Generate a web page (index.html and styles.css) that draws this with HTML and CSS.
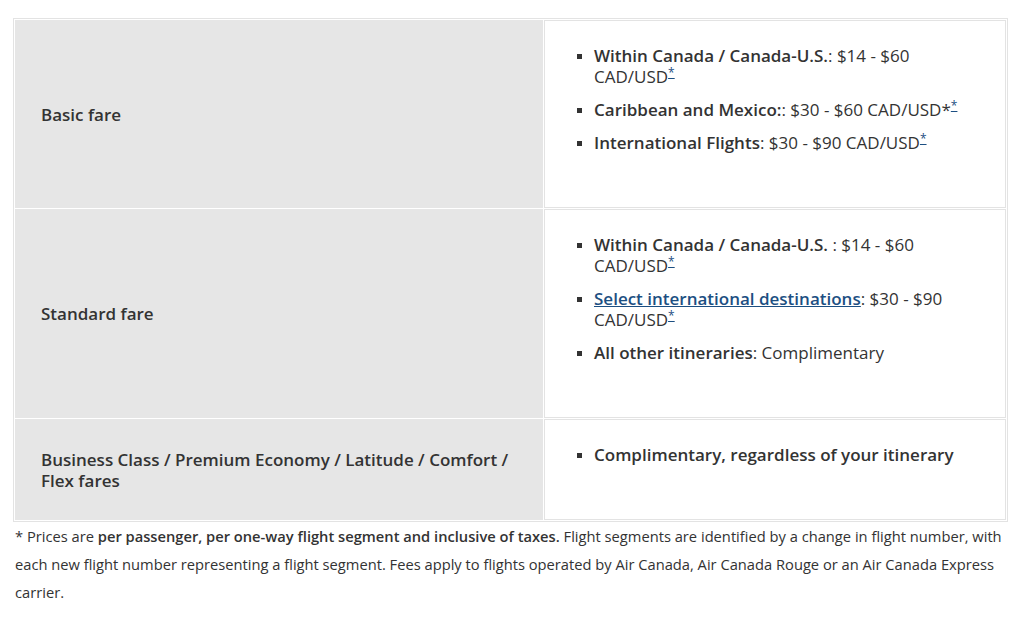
FILE: index.html
```html
<!DOCTYPE html>
<html lang="en">
<head>
<meta charset="utf-8">
<title>Seat selection fees</title>
<link rel="stylesheet" href="styles.css">
</head>
<body>
<div class="page">
  <table class="fares">
    <tr>
      <th class="fare-name">Basic fare</th>
      <td class="fare-info">
        <ul>
          <li><strong>Within Canada / Canada-U.S.</strong>: $14 - $60 CAD/USD<sup><a href="#note">*</a></sup></li>
          <li><strong>Caribbean and Mexico:</strong>: $30 - $60 CAD/USD*<sup><a href="#note">*</a></sup></li>
          <li><strong>International Flights</strong>: $30 - $90 CAD/USD<sup><a href="#note">*</a></sup></li>
        </ul>
      </td>
    </tr>
    <tr>
      <th class="fare-name">Standard fare</th>
      <td class="fare-info">
        <ul>
          <li><strong>Within Canada / Canada-U.S.</strong> : $14 - $60 CAD/USD<sup><a href="#note">*</a></sup></li>
          <li><a class="dest" href="#"><strong>Select international destinations</strong></a>: $30 - $90 CAD/USD<sup><a href="#note">*</a></sup></li>
          <li><strong>All other itineraries</strong>: Complimentary</li>
        </ul>
      </td>
    </tr>
    <tr>
      <th class="fare-name">Business Class / Premium Economy / Latitude / Comfort / Flex fares</th>
      <td class="fare-info">
        <ul>
          <li><strong>Complimentary, regardless of your itinerary</strong></li>
        </ul>
      </td>
    </tr>
  </table>
  <p class="note" id="note">* Prices are <strong>per passenger, per one-way flight segment and inclusive of taxes.</strong> Flight segments are identified by a change in flight number, with each new flight number representing a flight segment. Fees apply to flights operated by Air Canada, Air Canada Rouge or an Air Canada Express carrier.</p>
</div>
</body>
</html>
```
FILE: styles.css
```css
html, body {
  margin: 0;
  padding: 0;
  background: #ffffff;
}
body {
  font-family: "Open Sans", "Liberation Sans", sans-serif;
  color: #333333;
}
.page {
  padding: 18px 16px 0 13px;
}
.fares {
  width: 100%;
  border-collapse: separate;
  border-spacing: 1px;
  border: 1px solid #e3e3e3;
}
.fare-name {
  width: 528px;
  box-sizing: border-box;
  background: #e6e6e6;
  text-align: left;
  vertical-align: middle;
  font-size: 17px;
  font-weight: 600;
  line-height: 21px;
  padding: 24px 24px 24px 26px;
  color: #333333;
}
.fare-info {
  border: 1px solid #e3e3e3;
  vertical-align: middle;
  padding: 24px 30px 24px 33px;
  font-size: 17px;
  line-height: 21px;
}
.fare-info ul {
  margin: 0 0 30px 0;
  padding-left: 16px;
  list-style: square;
}
.fare-info li {
  margin-bottom: 12px;
}
.fare-info strong {
  font-weight: 600;
  color: #333333;
}
.fare-info li::marker {
  font-size: 14px;
}
sup {
  font-size: 12px;
  line-height: 0;
  vertical-align: 6px;
}
sup a {
  color: #1c4f82;
  text-decoration: underline;
}
.dest, .dest strong {
  color: #1c4f82;
  text-decoration: underline;
}
.note {
  margin: 0;
  padding-left: 2px;
  font-size: 14.7px;
  line-height: 28px;
  color: #333333;
}
.note strong {
  font-weight: 600;
}
```
